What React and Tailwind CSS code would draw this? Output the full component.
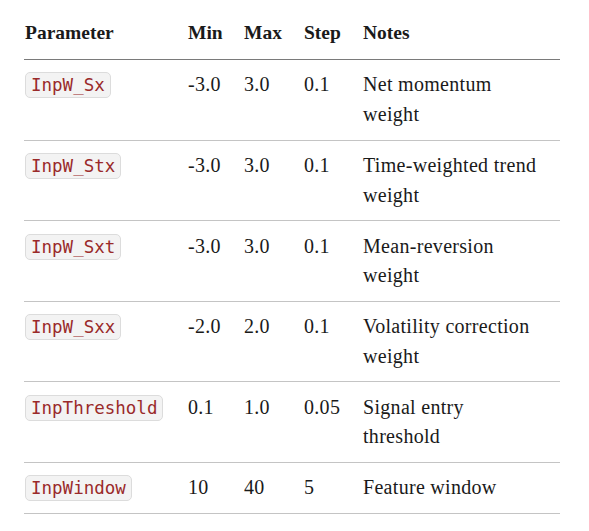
import React from "react";

const rows = [
  ["InpW_Sx", "-3.0", "3.0", "0.1", ["Net momentum", "weight"]],
  ["InpW_Stx", "-3.0", "3.0", "0.1", ["Time-weighted trend", "weight"]],
  ["InpW_Sxt", "-3.0", "3.0", "0.1", ["Mean-reversion", "weight"]],
  ["InpW_Sxx", "-2.0", "2.0", "0.1", ["Volatility correction", "weight"]],
  ["InpThreshold", "0.1", "1.0", "0.05", ["Signal entry", "threshold"]],
  ["InpWindow", "10", "40", "5", ["Feature window"]],
];

export default function App() {
  return (
    <div className="bg-white w-[589px] h-[531px] pl-[24px] pt-[8px] text-[#1a1a1a]" style={{ fontFamily: '"Liberation Serif", serif' }}>
      <table className="w-[536px] table-fixed border-collapse text-[20px] leading-[29.6px] tracking-[0.3px]">
        <colgroup>
          <col className="w-[164px]" />
          <col className="w-[56px]" />
          <col className="w-[60px]" />
          <col className="w-[59px]" />
          <col />
        </colgroup>
        <thead>
          <tr className="border-b border-[#7a7a7a] text-[19.5px] leading-[30px] tracking-normal">
            <th className="text-left font-bold pt-[10px] pb-[11px] pl-[1px]">Parameter</th>
            <th className="text-left font-bold pt-[10px] pb-[11px]">Min</th>
            <th className="text-left font-bold pt-[10px] pb-[11px]">Max</th>
            <th className="text-left font-bold pt-[10px] pb-[11px]">Step</th>
            <th className="text-left font-bold pt-[10px] pb-[11px]">Notes</th>
          </tr>
        </thead>
        <tbody>
          {rows.map((r) => (
            <tr key={r[0]} className="border-b border-[#c4c4c4] align-top">
              <td className="pt-[10.4px] pb-[10px] pl-[1px]">
                <code
                  className="inline-block h-[26px] leading-[24px] px-[5px] rounded-[5px] border border-[#dcdcdc] bg-[#f3f3f3] text-[#9a2a2a] text-[17.5px] tracking-normal mt-[2px]"
                  style={{ fontFamily: '"DejaVu Sans Mono", monospace' }}
                >
                  {r[0]}
                </code>
              </td>
              <td className="pt-[10.4px] pb-[10px]">{r[1]}</td>
              <td className="pt-[10.4px] pb-[10px]">{r[2]}</td>
              <td className="pt-[10.4px] pb-[10px]">{r[3]}</td>
              <td className="pt-[10.4px] pb-[10px]">
                {r[4].map((l, i) => (
                  <div key={i}>{l}</div>
                ))}
              </td>
            </tr>
          ))}
        </tbody>
      </table>
    </div>
  );
}
